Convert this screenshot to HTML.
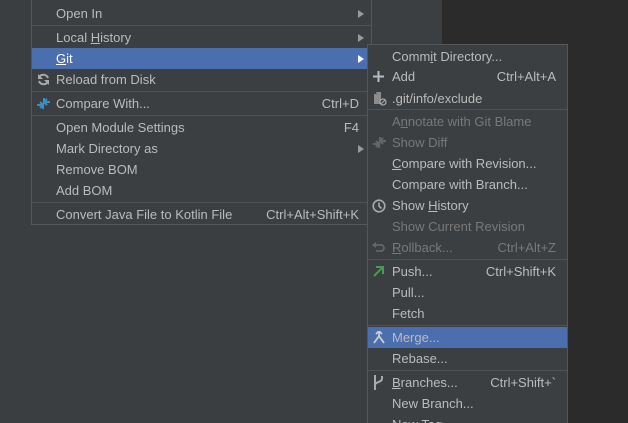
<!DOCTYPE html>
<html><head><meta charset="utf-8"><style>
*{margin:0;padding:0;box-sizing:border-box}
html{height:423px;overflow:hidden}
body{width:628px;height:423px;overflow:hidden;background:#3b3e41;position:relative;font-family:"Liberation Sans",sans-serif;font-size:13px;color:#bbbbbb}
.dark{position:absolute;left:442px;top:0;width:186px;height:423px;background:#2b2b2b}
.strip{position:absolute;left:371px;top:0;width:71px;height:44px;background:#3c3f41;border-left:1px solid #4a4d50}
.menu{position:absolute;background:#3c3f41;border:1px solid #555759}
.it{position:absolute;left:0;right:0;height:21px;line-height:21px}
.it .t{position:absolute;top:0}
.it .k{position:absolute;top:0}
.sel{background:#4b6eaf;color:#fff}
.dis{color:#787878}
.sep{position:absolute;left:0;right:0;height:1px;background:#515151}
.arr{position:absolute;top:7px;width:0;height:0;border-left:6px solid #9a9a9a;border-top:4px solid transparent;border-bottom:4px solid transparent}
.sel .arr{border-left-color:#fff}
u{text-decoration:underline}
svg{position:absolute}
</style></head><body>
<div class="dark"></div>
<div class="strip"></div>
<div class="menu" style="left:31px;top:-2px;width:341px;height:227px">
 <div class="it" style="top:4px"><span class="t" style="left:24px">Open In</span><span class="arr" style="left:326px"></span></div>
 <div class="sep" style="top:26px"></div>
 <div class="it" style="top:28px"><span class="t" style="left:24px">Local <u>H</u>istory</span><span class="arr" style="left:326px"></span></div>
 <div class="it sel" style="top:49px"><span class="t" style="left:24px"><u>G</u>it</span><span class="arr" style="left:326px"></span></div>
 <div class="it" style="top:70px"><svg style="left:5px;top:4px" width="13" height="13" viewBox="0 0 13 13"><path d="M11 5A5 5 0 0 0 2.5 3.5M2 8A5 5 0 0 0 10.5 9.5" stroke="#aaa" stroke-width="2" fill="none"/><path d="M1 1v5h5z" fill="#aaa"/><path d="M12 12V7H7z" fill="#aaa"/></svg><span class="t" style="left:24px">Reload from Disk</span></div>
 <div class="sep" style="top:92px"></div>
 <div class="it" style="top:94px"><svg style="left:4px;top:4px" width="15" height="13" viewBox="0 0 15 13"><path d="M1 8h6M4 5l3 3-3 3M7 6V12" stroke="#3592c4" stroke-width="2" fill="none"/><path d="M14 5H8M11 2L8 5l3 3M8 1v6" stroke="#3592c4" stroke-width="2" fill="none"/></svg><span class="t" style="left:24px">Compare With...</span><span class="k" style="right:12px">Ctrl+D</span></div>
 <div class="sep" style="top:116px"></div>
 <div class="it" style="top:118px"><span class="t" style="left:24px">Open Module Settings</span><span class="k" style="right:12px">F4</span></div>
 <div class="it" style="top:139px"><span class="t" style="left:24px">Mark Directory as</span><span class="arr" style="left:326px"></span></div>
 <div class="it" style="top:160px"><span class="t" style="left:24px">Remove BOM</span></div>
 <div class="it" style="top:181px"><span class="t" style="left:24px">Add BOM</span></div>
 <div class="sep" style="top:203px"></div>
 <div class="it" style="top:205px"><span class="t" style="left:24px">Convert Java File to Kotlin File</span><span class="k" style="right:12px">Ctrl+Alt+Shift+K</span></div>
</div>
<div class="menu" style="left:367px;top:44px;width:201px;height:390px">
 <div class="it" style="top:1px"><span class="t" style="left:24px">Comm<u>i</u>t Directory...</span></div>
 <div class="it" style="top:21px"><svg style="left:5px;top:5px" width="11" height="11"><path d="M5.5 0v11M0 5.5h11" stroke="#bbb" stroke-width="2"/></svg><span class="t" style="left:24px">Add</span><span class="k" style="right:11px">Ctrl+Alt+A</span></div>
 <div class="it" style="top:43px"><svg style="left:5px;top:3px" width="14" height="15" viewBox="0 0 14 15"><path d="M3 1h5v4H1v8h6" fill="#8c8c8c"/><rect x="1" y="3" width="7" height="10" fill="#8c8c8c"/><circle cx="10" cy="11" r="3" stroke="#aaa" stroke-width="1.2" fill="#3c3f41"/><path d="M8 13l4-4" stroke="#aaa"/></svg><span class="t" style="left:24px">.git/info/exclude</span></div>
 <div class="sep" style="top:64px"></div>
 <div class="it dis" style="top:66px"><span class="t" style="left:24px">A<u>n</u>notate with Git Blame</span></div>
 <div class="it dis" style="top:87px"><svg style="left:4px;top:4px" width="15" height="13" viewBox="0 0 15 13"><path d="M1 8h6M4 5l3 3-3 3M7 6V12" stroke="#666" stroke-width="2" fill="none"/><path d="M14 5H8M11 2L8 5l3 3M8 1v6" stroke="#666" stroke-width="2" fill="none"/></svg><span class="t" style="left:24px">Show Diff</span></div>
 <div class="it" style="top:108px"><span class="t" style="left:24px"><u>C</u>ompare with Revision...</span></div>
 <div class="it" style="top:129px"><span class="t" style="left:24px">Compare with Branch...</span></div>
 <div class="it" style="top:150px"><svg style="left:4px;top:4px" width="14" height="14"><circle cx="7" cy="7" r="5.8" stroke="#aaa" stroke-width="1.6" fill="none"/><path d="M7 3.5V7l2.5 2.5" stroke="#aaa" stroke-width="1.6" fill="none"/></svg><span class="t" style="left:24px">Show <u>H</u>istory</span></div>
 <div class="it dis" style="top:171px"><span class="t" style="left:24px">Show Current Revision</span></div>
 <div class="it dis" style="top:192px"><svg style="left:4px;top:5px" width="13" height="11"><path d="M3 3h6a3 3 0 0 1 0 6H4" stroke="#666" stroke-width="1.8" fill="none"/><path d="M0 3l4-3v6z" fill="#666"/></svg><span class="t" style="left:24px"><u>R</u>ollback...</span><span class="k" style="right:11px">Ctrl+Alt+Z</span></div>
 <div class="sep" style="top:214px"></div>
 <div class="it" style="top:216px"><svg style="left:5px;top:4px" width="12" height="12"><path d="M1 11L10 2M3 2h7v7" stroke="#499c54" stroke-width="2" fill="none"/></svg><span class="t" style="left:24px">Push...</span><span class="k" style="right:11px">Ctrl+Shift+K</span></div>
 <div class="it" style="top:237px"><span class="t" style="left:24px">Pull...</span></div>
 <div class="it" style="top:258px"><span class="t" style="left:24px">Fetch</span></div>
 <div class="sep" style="top:280px"></div>
 <div class="it sel" style="top:282px"><svg style="left:5px;top:4px" width="12" height="13"><path d="M6 0v5L1 12M6 5l5 7M3 3l3-3 3 3" stroke="#ccc" stroke-width="1.8" fill="none"/></svg><span class="t" style="left:24px;color:#bbb">Merge...</span></div>
 <div class="it" style="top:303px"><span class="t" style="left:24px">Rebase...</span></div>
 <div class="sep" style="top:325px"></div>
 <div class="it" style="top:327px"><svg style="left:5px;top:3px" width="11" height="15"><path d="M2 0v15M9 1v3c0 3-7 3-7 6" stroke="#aaa" stroke-width="2" fill="none"/></svg><span class="t" style="left:24px"><u>B</u>ranches...</span><span class="k" style="right:11px">Ctrl+Shift+`</span></div>
 <div class="it" style="top:348px"><span class="t" style="left:24px">New Branch...</span></div>
 <div class="it" style="top:369px"><span class="t" style="left:24px">New Tag...</span></div>
</div>
</body></html>
